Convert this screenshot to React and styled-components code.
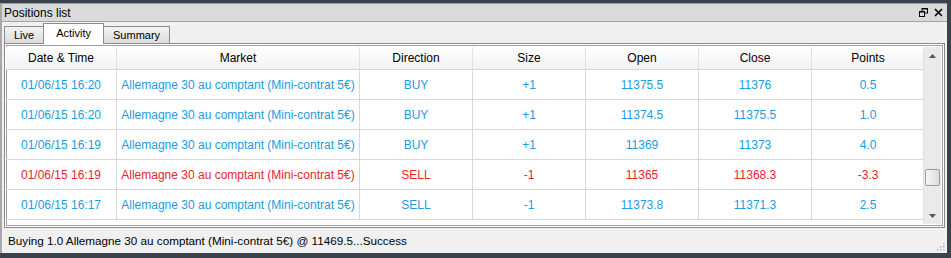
import React from 'react'
import styled, { createGlobalStyle } from 'styled-components'

const GlobalStyle = createGlobalStyle`
  html, body { margin: 0; padding: 0; background: #3a424c; }
  body { font-family: "Liberation Sans", Arial, sans-serif; font-size: 12px; }
`

const rows = [
  { date: '01/06/15 16:20', dir: 'BUY', size: '+1', open: '11375.5', close: '11376', points: '0.5' },
  { date: '01/06/15 16:20', dir: 'BUY', size: '+1', open: '11374.5', close: '11375.5', points: '1.0' },
  { date: '01/06/15 16:19', dir: 'BUY', size: '+1', open: '11369', close: '11373', points: '4.0' },
  { date: '01/06/15 16:19', dir: 'SELL', size: '-1', open: '11365', close: '11368.3', points: '-3.3', loss: true },
  { date: '01/06/15 16:17', dir: 'SELL', size: '-1', open: '11373.8', close: '11371.3', points: '2.5' },
]

// widths exclude the 1px right border of each cell
const columns = [
  { label: 'Date & Time', w: 110 },
  { label: 'Market', w: 242 },
  { label: 'Direction', w: 112 },
  { label: 'Size', w: 112 },
  { label: 'Open', w: 112 },
  { label: 'Close', w: 112 },
  { label: 'Points', w: 112 },
]

const Window = styled.div`
  width: 951px;
  height: 258px;
  background: #3a424c;
  display: flex;
  flex-direction: column;
`

const Panel = styled.div`
  width: 945px;
  height: 249px;
  margin-top: 3px;
  background: #f0f0f0;
  border-left: 2px solid #a9a9a9;
  border-top: 1px solid #9a9a9a;
  display: flex;
  flex-direction: column;
`

const TitleBar = styled.div`
  height: 17px;
  background: #dadada;
  border-bottom: 1px solid #a3a3a3;
  display: flex;
  align-items: center;
  padding: 0 4px 0 2px;
  color: #000;
`

const Title = styled.span`
  flex: 1;
`

const TitleIcon = styled.svg`
  width: 9px;
  height: 9px;
  margin-left: 6px;
`

const TabStrip = styled.div`
  height: 22px;
  display: flex;
  align-items: flex-end;
  padding-left: 2px;
  font-size: 11px;
`

const Tab = styled.div`
  height: ${(p) => (p.active ? '21px' : '18px')};
  padding: 0 ${(p) => (p.active ? '12px' : '9px')};
  box-sizing: border-box;
  border: 1px solid #898c95;
  border-bottom: ${(p) => (p.active ? 'none' : '1px solid #898c95')};
  background: ${(p) => (p.active ? '#ffffff' : 'linear-gradient(#f2f2f2, #dcdcdc)')};
  margin-left: ${(p) => (p.active ? '-1px' : '0')};
  margin-right: ${(p) => (p.active ? '-1px' : '0')};
  position: relative;
  z-index: ${(p) => (p.active ? 1 : 0)};
  display: flex;
  align-items: ${(p) => (p.active ? 'flex-start' : 'center')};
  padding-top: ${(p) => (p.active ? '3px' : '0')};
  color: #000;
`

const TableBox = styled.div`
  margin: -1px 2px 0 2px;
  height: 185px;
  border: 1px solid #8a8a8a;
  padding: 1px;
  background: #ffffff;
  box-sizing: border-box;
  display: flex;
  box-shadow: inset 0 0 0 1px #ffffff, inset 0 0 0 2px #a0a0a0;
`

const Grid = styled.div`
  flex: 1;
  overflow: hidden;
  padding: 2px 0 0 0;
`

const HeaderRow = styled.div`
  display: flex;
  height: 22px;
  background: linear-gradient(#ffffff, #f1f2f4);
  border-bottom: 1px solid #d5d5d5;
`

const HeaderCell = styled.div`
  width: ${(p) => p.w}px;
  flex: none;
  display: flex;
  align-items: center;
  justify-content: center;
  border-right: 1px solid #e1e1e1;
  color: #000;
`

const Row = styled.div`
  display: flex;
  height: 29px;
  border-bottom: 1px solid #d7d7d7;
  color: ${(p) => (p.loss ? '#e8262a' : '#1a9ce2')};
`

const Cell = styled.div`
  width: ${(p) => p.w}px;
  flex: none;
  display: flex;
  align-items: center;
  justify-content: center;
  border-right: 1px solid #d7d7d7;
  white-space: nowrap;
`

const ScrollBar = styled.div`
  width: 17px;
  margin: 2px 2px 2px 0;
  background: #eaeaea;
  border-left: 1px solid #e0e0e0;
  display: flex;
  flex-direction: column;
  align-items: center;
`

const Arrow = styled.div`
  height: 17px;
  width: 17px;
  display: flex;
  align-items: center;
  justify-content: center;
`

const Track = styled.div`
  flex: 1;
  display: flex;
  flex-direction: column;
  justify-content: flex-end;
  align-items: center;
  padding-bottom: 21px;
`

const Thumb = styled.div`
  width: 15px;
  height: 17px;
  border: 1px solid #9a9a9a;
  border-radius: 2px;
  box-sizing: border-box;
  background: linear-gradient(90deg, #f6f6f6, #dcdcdc);
`

const StatusBar = styled.div`
  flex: 1;
  display: flex;
  align-items: center;
  padding-left: 6px;
  color: #000;
  font-size: 11.7px;
  position: relative;
`

const Grip = styled.svg`
  position: absolute;
  right: 2px;
  bottom: 2px;
`

const App = () => {
  return (
    <>
      <GlobalStyle />
      <Window>
        <Panel>
          <TitleBar>
            <Title>Positions list</Title>
            <TitleIcon viewBox="0 0 9 9">
              <rect x="3" y="0.5" width="5.5" height="4.5" fill="none" stroke="#000" />
              <rect x="3" y="0" width="6" height="1.5" fill="#000" />
              <rect x="0.5" y="3.5" width="5" height="5" fill="#dadada" stroke="#000" />
              <rect x="0" y="3" width="6" height="1.5" fill="#000" />
            </TitleIcon>
            <TitleIcon viewBox="0 0 9 9">
              <path d="M1 1 L8 8 M8 1 L1 8" stroke="#000" strokeWidth="1.6" />
            </TitleIcon>
          </TitleBar>
          <TabStrip>
            <Tab>Live</Tab>
            <Tab active>Activity</Tab>
            <Tab>Summary</Tab>
          </TabStrip>
          <TableBox>
            <Grid>
              <HeaderRow>
                {columns.map((c) => (
                  <HeaderCell key={c.label} w={c.w}>{c.label}</HeaderCell>
                ))}
              </HeaderRow>
              {rows.map((r, i) => (
                <Row key={i} loss={r.loss}>
                  <Cell w={columns[0].w}>{r.date}</Cell>
                  <Cell w={columns[1].w}>Allemagne 30 au comptant (Mini-contrat 5€)</Cell>
                  <Cell w={columns[2].w}>{r.dir}</Cell>
                  <Cell w={columns[3].w}>{r.size}</Cell>
                  <Cell w={columns[4].w}>{r.open}</Cell>
                  <Cell w={columns[5].w}>{r.close}</Cell>
                  <Cell w={columns[6].w}>{r.points}</Cell>
                </Row>
              ))}
            </Grid>
            <ScrollBar>
              <Arrow>
                <svg width="7" height="4" viewBox="0 0 7 4"><path d="M0 4 L3.5 0 L7 4 Z" fill="#555" /></svg>
              </Arrow>
              <Track>
                <Thumb />
              </Track>
              <Arrow>
                <svg width="7" height="4" viewBox="0 0 7 4"><path d="M0 0 L7 0 L3.5 4 Z" fill="#555" /></svg>
              </Arrow>
            </ScrollBar>
          </TableBox>
          <StatusBar>
            Buying 1.0 Allemagne 30 au comptant (Mini-contrat 5€) @ 11469.5...Success
            <Grip width="10" height="10" viewBox="0 0 10 10">
              {[[8, 2], [8, 5], [5, 5], [8, 8], [5, 8], [2, 8]].map(([x, y], i) => (
                <rect key={i} x={x} y={y} width="1.5" height="1.5" fill="#b5b5b5" />
              ))}
            </Grip>
          </StatusBar>
        </Panel>
      </Window>
    </>
  )
}

export default App
